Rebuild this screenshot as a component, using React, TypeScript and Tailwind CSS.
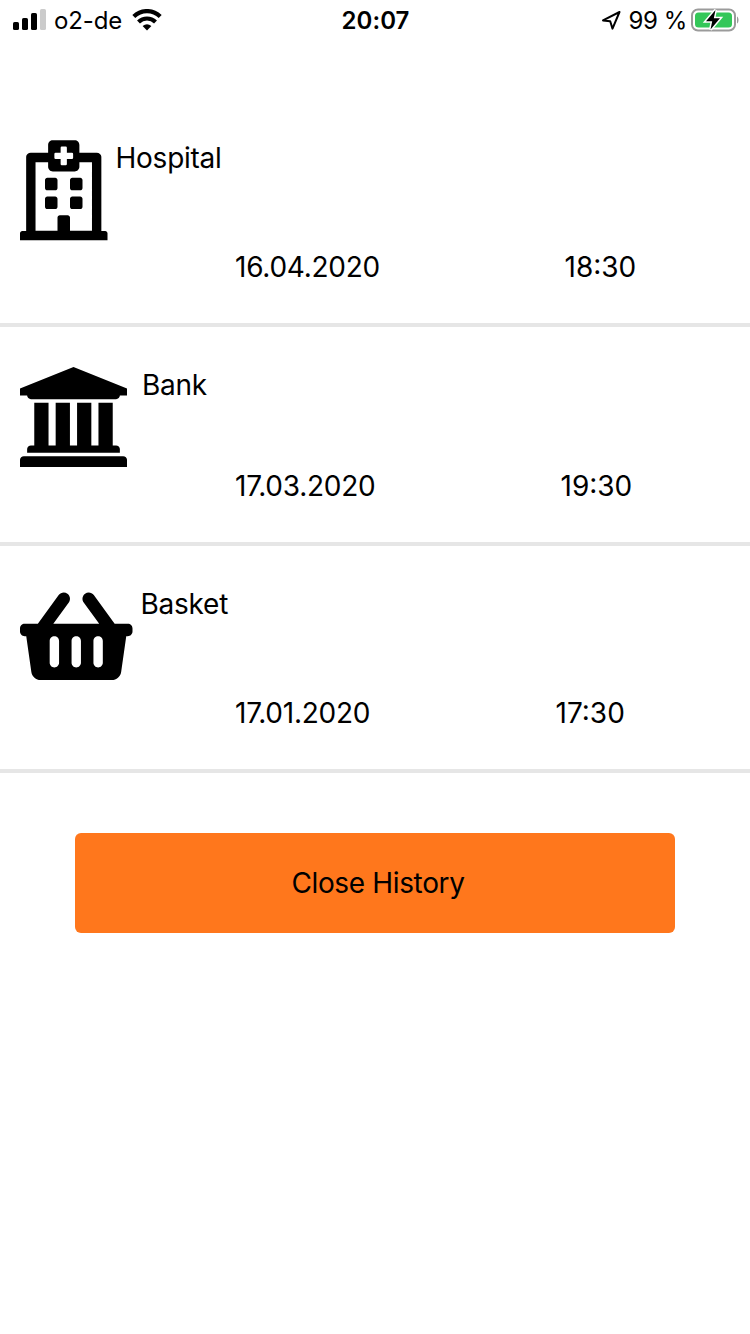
import React from "react";
import { FaRegHospital, FaShoppingBasket } from "react-icons/fa";

function BankIcon() {
  return (
    <svg viewBox="0 0 1920 1792" className="h-[100px] w-[107px]" fill="currentColor">
      <path d="M960 0l960 384v128h-128q0 26-20.5 45t-48.5 19h-1526q-28 0-48.5-19t-20.5-45h-128v-128zM256 640h256v768h128v-768h256v768h128v-768h256v768h128v-768h256v768h59q28 0 48.5 19t20.5 45v64h-1664v-64q0-26 20.5-45t48.5-19h59v-768zM1851 1600q28 0 48.5 19t20.5 45v128h-1920v-128q0-26 20.5-45t48.5-19h1782z" />
    </svg>
  );
}

function StatusBar() {
  return (
    <header className="grid h-10 grid-cols-[1fr_auto_1fr] items-center text-[24px] leading-[38px]">
      <div className="flex h-[38px] items-center pl-[13px]">
        <svg viewBox="0 0 33 22" className="h-[22px] w-[33px]">
          <rect x="0" y="13" width="6" height="8" rx="1.6" />
          <rect x="9" y="9" width="6" height="12" rx="1.6" />
          <rect x="18" y="4" width="6" height="17" rx="1.6" />
          <rect x="27" y="0" width="6" height="21" rx="1.6" fill="#cbcbcb" />
        </svg>
        <span className="ml-[8px] w-[68px] whitespace-nowrap pt-[2px] tracking-[-0.1px]">o2-de</span>
        <svg viewBox="0 0 30 22" className="ml-[9.500px] h-[22px] w-[30px]" fill="none" stroke="#000" strokeWidth="4.200">
          <path d="M1.800 7.400A19 19 0 0 1 28.200 7.400" />
          <path d="M6.500 12.900A12.300 12.300 0 0 1 23.500 12.900" />
          <path d="M15 21.500L10.600 17A7 7 0 0 1 19.400 17Z" fill="#000" stroke="none" />
        </svg>
      </div>
      <span className="pl-[1px] pt-[1px] font-semibold tracking-[0.1px]">20:07</span>
      <div className="flex h-[38px] items-center justify-end pr-[11px]">
        <svg viewBox="0 0 20 20" className="h-5 w-5" fill="none" stroke="#000" strokeWidth="2" strokeLinejoin="round">
          <path d="M18.500 2L2 10.400L9.200 11.200L11.500 18.600Z" />
        </svg>
        <span className="ml-[8px] whitespace-nowrap pt-[2px] tracking-[-0.4px]">99 %</span>
        <svg viewBox="0 0 48 24" className="ml-[4px] h-6 w-12">
          <rect x="1" y="1.500" width="43" height="21" rx="6" fill="none" stroke="#9b9b9b" strokeWidth="2" />
          <rect x="4" y="4.500" width="37" height="15" rx="3.500" fill="#34c759" />
          <path d="M46 8.500C48 9.500 48 14.500 46 15.500Z" fill="#9b9b9b" />
          <path d="M24.500 2L15 13.200H21.200L19.500 21.500L29 10.200H22.800Z" fill="#000" stroke="#fff" strokeWidth="3" paintOrder="stroke" />
        </svg>
      </div>
    </header>
  );
}

interface EntryProps {
  icon: React.ReactNode;
  name: string;
  date: string;
  time: string;
  topClass: string;
  nameClass: string;
  dateClass: string;
}

function Entry({ icon, name, date, time, topClass, nameClass, dateClass }: EntryProps) {
  return (
    <li className="border-b-4 border-[#e6e6e6] pb-10 pt-10">
      <div className={`flex items-start pl-5 ${topClass}`}>
        {icon}
        <span className={`leading-[36px] tracking-[-0.25px] ${nameClass}`}>{name}</span>
      </div>
      <div className="flex h-[35px] items-center pl-[235px] pt-[2px] leading-[32px]">
        <span className={`tracking-[-0.25px] ${dateClass}`}>{date}</span>
        <span>{time}</span>
      </div>
    </li>
  );
}

export default function App() {
  return (
    <div className="min-h-[1334px] w-[750px] bg-white font-['Inter',sans-serif] text-black">
      <StatusBar />
      <main className="pt-[60px] text-[28px]">
        <ul>
          <Entry
            icon={<FaRegHospital className="h-[100.5px] w-[87.5px]" />}
            name="Hospital"
            date="16.04.2020"
            time="18:30"
            topClass="h-[108px]"
            nameClass="ml-[8px]"
            dateClass="w-[329.5px]"
          />
          <Entry
            icon={<BankIcon />}
            name="Bank"
            date="17.03.2020"
            time="19:30"
            topClass="h-[100px]"
            nameClass="ml-[15px]"
            dateClass="w-[325.5px]"
          />
          <Entry
            icon={<FaShoppingBasket className="h-[100.5px] w-[112.5px]" />}
            name="Basket"
            date="17.01.2020"
            time="17:30"
            topClass="h-[108px]"
            nameClass="ml-[8px]"
            dateClass="w-[320.5px]"
          />
        </ul>
        <button className="mx-auto mt-[60px] flex h-[100px] w-[600px] items-center justify-center rounded-md bg-[#ff771c] pb-[1px] pl-[6px] tracking-[-0.35px]">
          Close History
        </button>
      </main>
    </div>
  );
}
